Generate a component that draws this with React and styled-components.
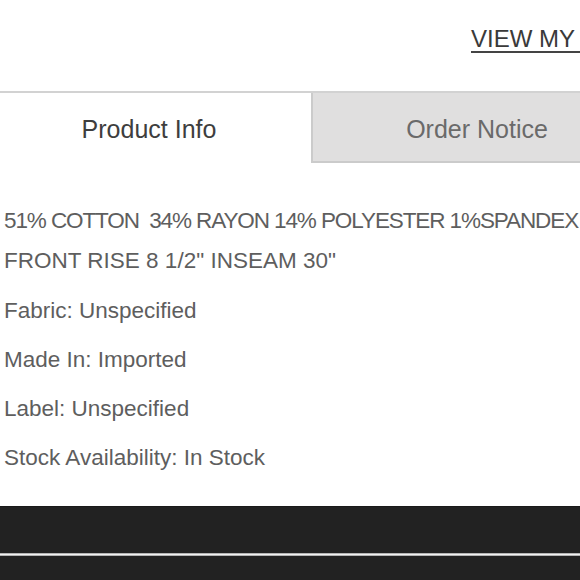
import React from 'react';
import styled, { createGlobalStyle } from 'styled-components';

const GlobalStyle = createGlobalStyle`
  html, body {
    margin: 0;
    padding: 0;
    background: #fff;
    overflow: hidden;
  }
  body {
    font-family: "Liberation Sans", Arial, sans-serif;
  }
`;

const Page = styled.div`
  width: 580px;
  height: 580px;
  overflow: hidden;
  display: flex;
  flex-direction: column;
`;

const Header = styled.div`
  height: 91px;
  display: flex;
  justify-content: flex-start;
  padding-left: 471px;
  box-sizing: border-box;
  white-space: nowrap;
`;

const CartLink = styled.a`
  margin-top: 25px;
  font-size: 24px;
  line-height: 28px;
  height: 26px;
  color: #3a3a3a;
  text-decoration: none;
  border-bottom: 2px solid #444;
  white-space: nowrap;
`;

const Tabs = styled.div`
  display: flex;
  border-top: 2px solid #d2d2d2;
  height: 70px;
  width: 660px;
`;

const Tab = styled.div`
  box-sizing: border-box;
  flex: 0 0 ${p => (p.$active ? '311px' : '330px')};
  display: flex;
  align-items: center;
  justify-content: center;
  font-size: 25px;
  padding-right: ${p => (p.$active ? '13px' : '0')};
  padding-top: ${p => (p.$active ? '2px' : '4px')};
  color: ${p => (p.$active ? '#3e3e3e' : '#6a6a6a')};
  background: ${p => (p.$active ? '#fff' : '#e0dfdf')};
  border-left: ${p => (p.$active ? 'none' : '2px solid #cbcbcb')};
  border-bottom: ${p => (p.$active ? 'none' : '2px solid #cbcbcb')};
`;

const Details = styled.div`
  display: flex;
  flex-direction: column;
  gap: 9px;
  padding: 38px 0 0 4px;
  color: #5e5e5e;
  font-size: 22.5px;
  line-height: 40px;
  white-space: nowrap;
`;

const Description = styled.div`
  display: flex;
  flex-direction: column;
  margin-bottom: 1px;
`;

const DescLine = styled.span`
  letter-spacing: ${p => (p.$tight ? '-1.1px' : '0')};
`;

const Spec = styled.div``;

const Footer = styled.div`
  margin-top: 28px;
  flex: 1;
  display: flex;
  flex-direction: column;
  background: #222;
  border-top: 1px solid #1a1a1a;
`;

const FooterBand = styled.div`
  height: 46px;
`;

const FooterRule = styled.div`
  height: 3px;
  background: linear-gradient(#8a8a8a, #f2f2f2 40%, #f2f2f2 60%, #8a8a8a);
`;

const specs = [
  ['Fabric', 'Unspecified'],
  ['Made In', 'Imported'],
  ['Label', 'Unspecified'],
  ['Stock Availability', 'In Stock'],
];

export default function App() {
  return (
    <Page>
      <GlobalStyle />
      <Header>
        <CartLink href="#">VIEW MY CLOSET</CartLink>
      </Header>
      <Tabs>
        <Tab $active>Product Info</Tab>
        <Tab>Order Notice</Tab>
      </Tabs>
      <Details>
        <Description>
          <DescLine $tight>51% COTTON&nbsp; 34% RAYON 14% POLYESTER 1%SPANDEX</DescLine>
          <DescLine>FRONT RISE 8 1/2" INSEAM 30"</DescLine>
        </Description>
        {specs.map(([k, v]) => (
          <Spec key={k}>{k}: {v}</Spec>
        ))}
      </Details>
      <Footer>
        <FooterBand />
        <FooterRule />
      </Footer>
    </Page>
  );
}
